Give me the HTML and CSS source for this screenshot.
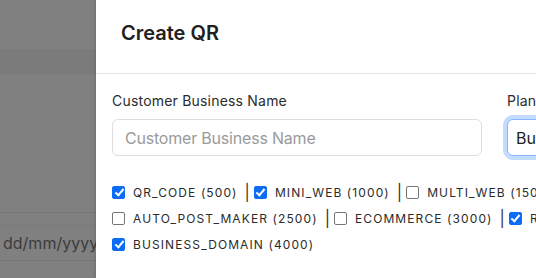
FILE: index.html
```html
<!DOCTYPE html>
<html>
<head>
<meta charset="utf-8">
<link rel="stylesheet" href="styles.css">
</head>
<body>
<div class="screen">
  <div class="backdrop">
    <div class="bd-top"></div>
    <div class="bd-band"></div>
    <div class="bd-mid"></div>
    <div class="bd-row"></div>
    <div class="bd-date">dd/mm/yyyy</div>
    <div class="bd-rest"></div>
  </div>
  <div class="drawer">
    <div class="drawer-header">
      <h2 class="title">Create QR</h2>
    </div>
    <div class="drawer-body">
      <div class="form-row">
        <div class="field">
          <label class="label">Customer Business Name</label>
          <input class="input" type="text" placeholder="Customer Business Name">
        </div>
        <div class="field">
          <label class="label">Plan</label>
          <div class="select">Business Plan</div>
        </div>
      </div>
      <div class="checks">
        <div class="check-row">
          <label class="check"><span class="box on"></span><span class="ctext">QR_CODE (500)</span></label><span class="sep">|</span>
          <label class="check"><span class="box on"></span><span class="ctext">MINI_WEB (1000)</span></label><span class="sep">|</span>
          <label class="check"><span class="box"></span><span class="ctext">MULTI_WEB (1500)</span></label><span class="sep">|</span>
        </div>
        <div class="check-row">
          <label class="check"><span class="box"></span><span class="ctext">AUTO_POST_MAKER (2500)</span></label><span class="sep">|</span>
          <label class="check"><span class="box"></span><span class="ctext">ECOMMERCE (3000)</span></label><span class="sep">|</span>
          <label class="check"><span class="box on"></span><span class="ctext">RESELLER (3500)</span></label><span class="sep">|</span>
        </div>
        <div class="check-row">
          <label class="check"><span class="box on"></span><span class="ctext">BUSINESS_DOMAIN (4000)</span></label>
        </div>
      </div>
    </div>
  </div>
</div>
</body>
</html>
```

FILE: styles.css
```css
* { box-sizing: border-box; }
html, body { margin: 0; padding: 0; }
body {
  width: 536px;
  height: 278px;
  overflow: hidden;
  font-family: Inter, "Noto Sans", sans-serif;
  background: #ffffff;
}
.screen {
  display: flex;
  width: 536px;
  height: 278px;
  overflow: hidden;
}
.backdrop {
  flex: 0 0 96px;
  width: 96px;
  min-width: 0;
  overflow: hidden;
  background: #808080;
  display: flex;
  flex-direction: column;
}
.bd-top { height: 49px; }
.bd-band { height: 25px; background: #7b7b7b; }
.bd-mid { height: 139px; border-bottom: 1px solid #777777; }
.bd-row { height: 13px; border-bottom: 1px solid #7a7a7a; }
.bd-date {
  height: 35px;
  border-bottom: 1px solid #777777;
  color: #3c3c3c;
  font-family: Inter, sans-serif;
  font-size: 16px;
  line-height: 34px;
  padding-left: 3px;
  white-space: nowrap;
  overflow: hidden;
}
.bd-rest { flex: 1; }
.drawer {
  flex: 0 0 auto;
  width: 900px;
  background: #ffffff;
  box-shadow: -1px 0 3px rgba(0,0,0,0.15);
}
.drawer-header {
  height: 74px;
  border-bottom: 1px solid #e3e3e3;
  padding: 20px 25px 0;
}
.title {
  margin: 0;
  font-size: 20px;
  font-weight: 600;
  color: #212121;
  line-height: 26px;
}
.drawer-body {
  padding: 18px 16px 0;
}
.form-row {
  display: grid;
  grid-template-columns: 370px 370px;
  column-gap: 25px;
}
.field { display: flex; flex-direction: column; }
.label {
  font-size: 14px;
  letter-spacing: 0.2px;
  color: #2b2b2b;
  line-height: 17px;
  margin-bottom: 10px;
}
.input, .select {
  height: 37px;
  border: 1px solid #dedede;
  border-radius: 6px;
  padding: 0 12px;
  font-family: Inter, sans-serif;
  font-size: 16px;
  color: #222;
  background: #fff;
  outline: none;
}
.input::placeholder { color: #9a9a9a; letter-spacing: -0.2px; }
.select {
  display: flex;
  align-items: center;
  padding-left: 8px;
  border-color: #86b7fe;
  box-shadow: 0 0 0 4px rgba(13,110,253,0.25);
}
.checks {
  margin-top: 26px;
  display: flex;
  flex-direction: column;
  gap: 6px;
}
.check-row {
  display: flex;
  align-items: center;
  white-space: nowrap;
  height: 20px;
}
.check {
  display: flex;
  align-items: center;
}
.box {
  width: 13px;
  height: 13px;
  border: 1px solid #767676;
  border-radius: 2px;
  background: #fff;
  margin-right: 8px;
  position: relative;
}
.box.on {
  background: #0b6cf5;
  border-color: #0b6cf5;
}
.box.on::after {
  content: "";
  position: absolute;
  left: 3.5px;
  top: 0.5px;
  width: 3px;
  height: 7px;
  border: solid #fff;
  border-width: 0 2px 2px 0;
  transform: rotate(40deg);
}
.ctext {
  font-size: 12px;
  letter-spacing: 1.1px;
  color: #2b2b2b;
}
.sep {
  font-size: 16px;
  color: #333;
  margin: 0 4px 0 7px;
  line-height: 20px;
}
```
